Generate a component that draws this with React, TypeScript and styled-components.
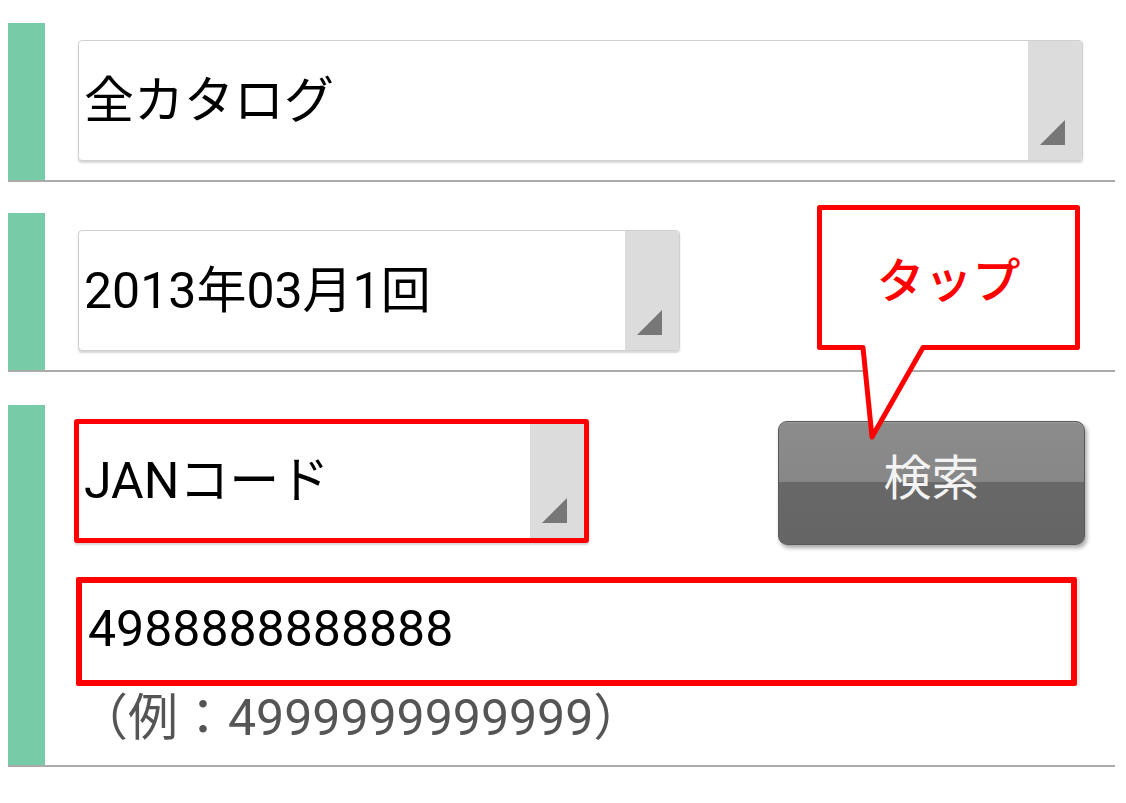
import * as React from 'react';
import styled, { createGlobalStyle } from 'styled-components';

const GlobalStyle = createGlobalStyle`
  body {
    margin: 0;
    background: #ffffff;
    font-family: Roboto, "Noto Sans CJK JP", sans-serif;
    color: #000000;
  }
`;

const Page = styled.div`
  position: relative;
  width: 1126px;
  height: 803px;
  box-sizing: border-box;
  padding: 23px 0 0 8px;
  overflow: hidden;
`;

const Section = styled.section<{ $gap?: number }>`
  display: flex;
  width: 1107px;
  border-bottom: 2px solid #ababab;
  margin-bottom: ${p => p.$gap || 0}px;
`;

const GreenBar = styled.div`
  width: 37px;
  flex-shrink: 0;
  background: #77cba7;
`;

const Body = styled.div<{ $top: number; $bottom: number }>`
  flex: 1;
  display: flex;
  flex-direction: column;
  padding: ${p => p.$top}px 0 ${p => p.$bottom}px 33px;
`;

const Select = styled.div<{ $w: number; $hl?: boolean }>`
  display: flex;
  width: ${p => p.$w}px;
  height: ${p => (p.$hl ? 124 : 121)}px;
  box-sizing: border-box;
  margin-left: ${p => (p.$hl ? -4 : 0)}px;
  border: ${p => (p.$hl ? '5px solid #ff0000' : '1px solid #d0d0d0')};
  border-radius: ${p => (p.$hl ? 3 : 4)}px;
  background: #ffffff;
  box-shadow: 0 2px 2px rgba(0, 0, 0, 0.16);
  overflow: hidden;
`;

const SelectLabel = styled.div`
  flex: 1;
  display: flex;
  align-items: center;
  padding-left: 5px;
  font-size: 50px;
  line-height: 60px;
  white-space: nowrap;
`;

const ArrowCell = styled.div`
  width: 54px;
  flex-shrink: 0;
  display: flex;
  align-items: flex-end;
  justify-content: flex-end;
  padding: 0 17px 15px 0;
  box-sizing: border-box;
  background: #dcdcdc;
`;

const TopRow = styled.div`
  display: flex;
  justify-content: space-between;
  align-items: flex-start;
`;

const SearchButton = styled.button`
  width: 307px;
  height: 124px;
  margin: 2px 30px 0 0;
  padding: 0 0 8px;
  border: 1px solid #595959;
  border-radius: 9px;
  background: linear-gradient(#8c8c8c 0%, #878787 49%, #686868 49%, #656565 100%);
  box-shadow: 2px 3px 4px rgba(0, 0, 0, 0.35), inset 0 1px 0 rgba(255, 255, 255, 0.15);
  color: #f3f3f3;
  font-family: Roboto, "Noto Sans CJK JP", sans-serif;
  font-size: 48px;
  line-height: 60px;
`;

const CodeInput = styled.div`
  display: flex;
  align-items: center;
  width: 1001px;
  height: 109px;
  box-sizing: border-box;
  margin: 32px 0 0 -2px;
  padding: 0 0 6px 6px;
  border: 6px solid #ff0000;
  border-radius: 2px;
  box-shadow: 3px 0 0 #ececec;
  font-size: 50px;
  line-height: 60px;
`;

const Hint = styled.div`
  margin-top: 2px;
  font-size: 50px;
  line-height: 60px;
  color: #555555;
  white-space: nowrap;
`;

const Callout = styled.div`
  position: absolute;
  left: 812px;
  top: 200px;
  width: 275px;
  height: 245px;
`;

const CalloutText = styled.div`
  position: absolute;
  left: 7px;
  top: 7px;
  width: 259px;
  height: 141px;
  display: flex;
  align-items: center;
  justify-content: center;
  padding-bottom: 2px;
  box-sizing: border-box;
  color: #ff0000;
  font-family: "Noto Sans CJK JP", sans-serif;
  font-weight: 500;
  font-size: 48px;
`;

const Arrow = () => (
  <svg width="25" height="25" viewBox="0 0 25 25">
    <polygon points="25,0 25,25 0,25" fill="#777777" />
  </svg>
);

interface DropProps {
  label: string;
  width: number;
  highlight?: boolean;
}

const Dropdown = ({ label, width, highlight }: DropProps) => (
  <Select $w={width} $hl={highlight}>
    <SelectLabel>{label}</SelectLabel>
    <ArrowCell>
      <Arrow />
    </ArrowCell>
  </Select>
);

export default function App() {
  return (
    <Page>
      <GlobalStyle />
      <Section $gap={31}>
        <GreenBar />
        <Body $top={17} $bottom={19}>
          <Dropdown label="全カタログ" width={1005} />
        </Body>
      </Section>
      <Section $gap={33}>
        <GreenBar />
        <Body $top={17} $bottom={19}>
          <Dropdown label="2013年03月1回" width={602} />
        </Body>
      </Section>
      <Section>
        <GreenBar />
        <Body $top={14} $bottom={17}>
          <TopRow>
            <Dropdown label="JANコード" width={515} highlight />
            <SearchButton>検索</SearchButton>
          </TopRow>
          <CodeInput>4988888888888</CodeInput>
          <Hint>（例：4999999999999）</Hint>
        </Body>
      </Section>

      <Callout>
        <svg width="275" height="245" viewBox="0 0 275 245">
          <path
            d="M7.5 7.5 H265.5 V147.5 H111 L60 237 L51 147.5 H7.5 Z"
            fill="#ffffff"
            stroke="#ff0000"
            strokeWidth="5"
            strokeLinejoin="round"
          />
        </svg>
        <CalloutText>タップ</CalloutText>
      </Callout>
    </Page>
  );
}
